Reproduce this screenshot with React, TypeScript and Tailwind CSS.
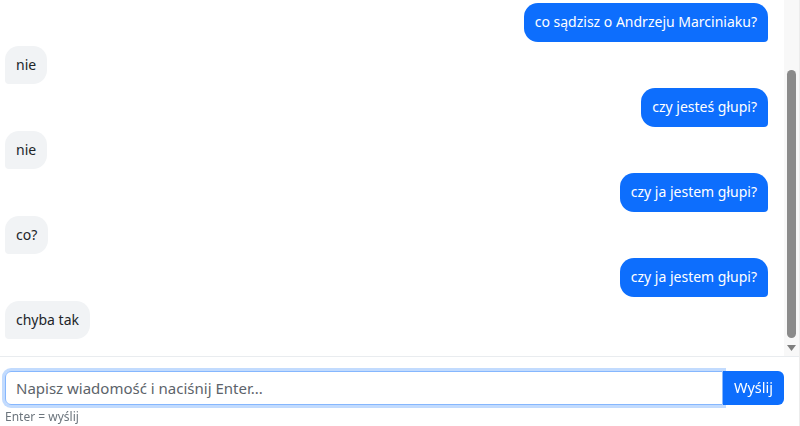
import React, { useState } from 'react';

type Msg = { role: 'user' | 'bot'; text: string };

const messages: Msg[] = [
  { role: 'user', text: 'co sądzisz o Andrzeju Marciniaku?' },
  { role: 'bot', text: 'nie' },
  { role: 'user', text: 'czy jesteś głupi?' },
  { role: 'bot', text: 'nie' },
  { role: 'user', text: 'czy ja jestem głupi?' },
  { role: 'bot', text: 'co?' },
  { role: 'user', text: 'czy ja jestem głupi?' },
  { role: 'bot', text: 'chyba tak' },
];

// static scrollbar, the list is shown scrolled to the bottom
const ScrollTrack = () => (
  <div className="flex w-[15px] shrink-0 flex-col items-center bg-[#f8f8f8] pt-[70px]">
    <div className="h-[268px] w-[9px] rounded-full bg-[#8b8b8b]" />
    <svg width="9" height="7" viewBox="0 0 9 7" className="mt-[7px]">
      <path d="M0 0 H9 L4.5 6 Z" fill="#7e7e7e" />
    </svg>
  </div>
);

export default function App() {
  const [input, setInput] = useState('');

  return (
    <div className="flex h-[426px] w-[800px] flex-col border-r border-[#ececec] bg-white font-['Noto_Sans',sans-serif] text-[14px] text-[#212529]">
      <div className="flex h-[356px] shrink-0">
        <div className="flex flex-1 flex-col gap-1 overflow-hidden pl-[5px] pr-4 pt-[3px]">
          {messages.map((m, i) => (
            <div key={i} className={`flex ${m.role === 'user' ? 'justify-end' : 'justify-start'}`}>
              <div
                className={`px-[11px] py-2 leading-[22.5px] ${
                  m.role === 'user'
                    ? 'rounded-[14px] rounded-br-[4px] bg-[#0d6efd] text-white'
                    : 'rounded-[14px] rounded-bl-[4px] bg-[#f1f3f5] text-[#212529]'
                }`}
              >
                {m.text}
              </div>
            </div>
          ))}
        </div>
        <ScrollTrack />
      </div>

      <div className="border-t border-[#e9ecef] pl-[5px] pr-[15px] pt-[14px]">
        <div className="flex h-[34px]">
          <input
            autoFocus
            type="text"
            value={input}
            onChange={(e) => setInput(e.target.value)}
            placeholder="Napisz wiadomość i naciśnij Enter..."
            className="min-w-0 flex-1 rounded-l-[6px] border border-[#86b7fe] px-[10px] text-[15px] text-[#212529] caret-[#212529] shadow-[0_0_0_3px_rgba(13,110,253,0.25)] outline-none placeholder:text-[#5c636a]"
          />
          <button className="rounded-r-[6px] bg-[#0d6efd] px-[11px] text-[14.5px] text-white">Wyślij</button>
        </div>
        <div className="mt-[4px] text-[12px] leading-[15px] text-[#6c757d]">Enter = wyślij</div>
      </div>
    </div>
  );
}
